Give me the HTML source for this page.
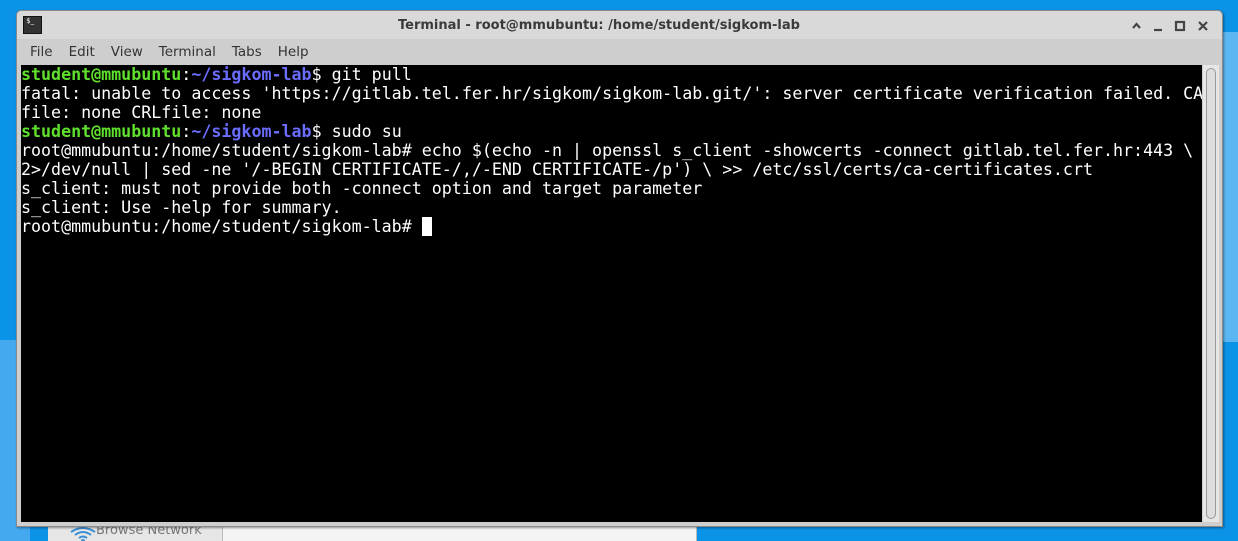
<!DOCTYPE html>
<html><head><meta charset="utf-8"><style>
html,body{margin:0;width:1238px;height:541px;overflow:hidden}
body{position:relative;background:#0b93e8;font-family:"DejaVu Sans","Liberation Sans",sans-serif}
.bgl{position:absolute;left:0;top:340px;width:30px;height:201px;background:#45a9f0}
.bgr{position:absolute;left:1220px;top:32px;width:18px;height:310px;background:#5cb6f2}
.back{position:absolute;left:48px;top:524px;width:647px;height:17px;background:#f4f4f4;border:1px solid #bbb;border-bottom:0}
.tab{position:absolute;left:48px;top:524px;width:174px;height:17px;background:#e6e6e6;border-right:1px solid #bbb;font-size:13px;color:#777;overflow:hidden}
.win{position:absolute;left:16px;top:10px;width:1205px;height:515px;background:#cecece;border:1px solid #8a8a8a;border-radius:5px 5px 0 0;box-shadow:1px 1px 2px rgba(0,0,0,.4)}
.title{position:absolute;left:0;top:0;width:100%;height:28px;background:#d9d9d9;border-radius:5px 5px 0 0;line-height:29px;font-size:13px;color:#333}
.menu{position:absolute;left:13px;top:33px;font-size:13.5px;color:#333}
.menu span{margin-right:16px}
.term{position:absolute;left:4px;top:54px;width:1181px;height:457px;background:#000;font-family:"DejaVu Sans Mono","Liberation Mono",monospace;font-size:16.65px;line-height:19px;color:#fff;white-space:pre;overflow:hidden}
.g{color:#5fe02c;font-weight:bold}.b{color:#6a6dff;font-weight:bold}
.sb{position:absolute;left:1186px;top:54px;width:16px;height:457px;background:#e6e6e6}
.th{position:absolute;left:3px;top:3px;width:8px;height:449px;border:1px solid #999;border-radius:5px;background:#ddd}
</style></head><body>
<div class="bgl"></div><div class="bgr"></div>
<div class="back"></div>
<div class="tab"><svg width="30" height="16" style="position:absolute;left:20px;top:2px" viewBox="0 0 30 16"><path d="M3 6 Q15 -2 27 6 M7 9 Q15 3 23 9 M11 12 Q15 9 19 12" stroke="#3a8fd6" stroke-width="2" fill="none"/><circle cx="15" cy="15" r="2" fill="#3a8fd6"/></svg><span style="position:absolute;left:48px;top:-1px">Browse Network</span></div>
<div class="win">
<div class="title"><div style="position:absolute;left:6px;top:5px;width:17px;height:16px;background:#333;border:1px solid #111;color:#fff;font-size:7px;line-height:9px;text-align:left">&nbsp;$_</div>
<span style="position:absolute;left:381px;top:0;font-weight:bold;color:#3a3a3a;font-size:13px">Terminal - root@mmubuntu: /home/student/sigkom-lab</span>
<svg style="position:absolute;left:1114px;top:8px" width="80" height="14" viewBox="0 0 80 14"><g stroke="#444" stroke-width="2.2" fill="none"><path d="M2 9 L5.5 5 L9 9"/><path d="M23 11 H31"/><rect x="45" y="3" width="8" height="8"/><path d="M68 3 L76 11 M76 3 L68 11"/></g></svg></div>
<div class="menu"><span>File</span><span>Edit</span><span>View</span><span>Terminal</span><span>Tabs</span><span>Help</span></div>
<div class="term"><span class="g">student@mmubuntu</span>:<span class="b">~/sigkom-lab</span>$ git pull
fatal: unable to access 'https://gitlab.tel.fer.hr/sigkom/sigkom-lab.git/': server certificate verification failed. CA
file: none CRLfile: none
<span class="g">student@mmubuntu</span>:<span class="b">~/sigkom-lab</span>$ sudo su
root@mmubuntu:/home/student/sigkom-lab# echo $(echo -n | openssl s_client -showcerts -connect gitlab.tel.fer.hr:443 \
2&gt;/dev/null | sed -ne '/-BEGIN CERTIFICATE-/,/-END CERTIFICATE-/p') \ &gt;&gt; /etc/ssl/certs/ca-certificates.crt
s_client: must not provide both -connect option and target parameter
s_client: Use -help for summary.
root@mmubuntu:/home/student/sigkom-lab# <span style="background:#fff"> </span></div>
<div class="sb"><div class="th"></div></div>
</div>
</body></html>
